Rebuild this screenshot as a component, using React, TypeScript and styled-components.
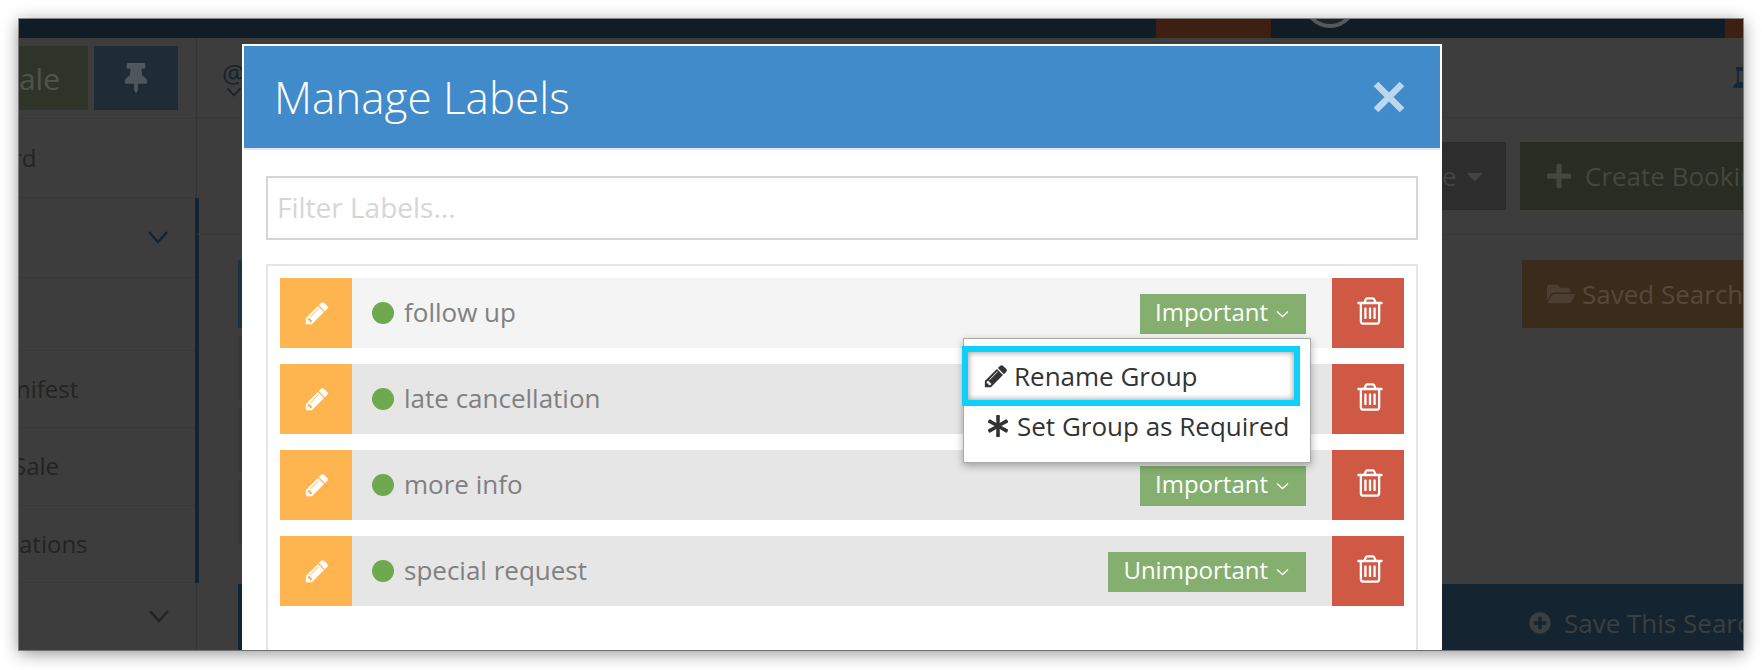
import React from 'react';
import styled, { createGlobalStyle } from 'styled-components';
import { FaAsterisk, FaCaretDown, FaFolderOpen, FaPlus, FaPlusCircle, FaThumbtack } from 'react-icons/fa';

const PENCIL =
  'M491 1536l91-91-235-235-91 91v107h128v128h107zm523-928q0-22-22-22-10 0-17 7l-542 542q-7 7-7 17 0 22 22 22 10 0 17-7l542-542q7-7 7-17zm-54-192l416 416-832 832h-416v-416zm683 96q0 53-37 90l-166 166-416-416 166-165q36-38 90-38 53 0 91 38l235 234q37 39 37 91z';
const TRASH =
  'M704 736v576q0 14-9 23t-23 9h-64q-14 0-23-9t-9-23v-576q0-14 9-23t23-9h64q14 0 23 9t9 23zm256 0v576q0 14-9 23t-23 9h-64q-14 0-23-9t-9-23v-576q0-14 9-23t23-9h64q14 0 23 9t9 23zm256 0v576q0 14-9 23t-23 9h-64q-14 0-23-9t-9-23v-576q0-14 9-23t23-9h64q14 0 23 9t9 23zm128 724v-948h-896v948q0 22 7 40.5t14.5 27 10.5 8.5h832q3 0 10.5-8.5t14.5-27 7-40.5zm-672-1076h448l-48-117q-7-9-17-11h-317q-10 2-17 11zm928 32v64q0 14-9 23t-23 9h-96v948q0 83-47 143.5t-113 60.5h-832q-66 0-113-58.5t-47-141.5v-952h-96q-14 0-23-9t-9-23v-64q0-14 9-23t23-9h309l70-167q15-37 54-63t79-26h320q40 0 79 26t54 63l70 167h309q14 0 23 9t9 23z';

const Global = createGlobalStyle`
  * { box-sizing: border-box; }
  html, body { margin: 0; padding: 0; background: #fff; }
  body { font-family: "Open Sans", "Liberation Sans", sans-serif; }
`;

const Page = styled.div`
  width: 1762px;
  height: 670px;
  padding: 19px 19px 20px;
  overflow: hidden;
`;

const Screen = styled.div`
  position: relative;
  width: 100%;
  height: 100%;
  display: flex;
  flex-direction: column;
  background: #3d3d3d;
  overflow: hidden;
`;

const Frame = styled.div`
  width: 100%;
  height: 100%;
  box-shadow: 0 3px 16px rgba(0, 0, 0, 0.45), 0 0 0 1px rgba(130, 130, 130, 0.8);
`;

const TopBar = styled.div`
  height: 19px;
  flex: none;
  display: flex;
  background: #101c26;
`;

const TopGap = styled.div<{ $w: number }>`
  width: ${p => p.$w}px;
  flex: none;
`;

const TopOrange = styled.div<{ $w: number }>`
  width: ${p => p.$w}px;
  flex: none;
  background: #3d2012;
`;

const Logo = styled.div`
  width: 54px;
  height: 54px;
  margin: -45px 0 0 32px;
  flex: none;
  border-radius: 50%;
  border: 4px solid #55595b;
  background: #1c2529;
`;

const Body = styled.div`
  flex: 1;
  display: flex;
  min-height: 0;
`;

const Sidebar = styled.div`
  width: 178px;
  flex: none;
  display: flex;
  flex-direction: column;
  border-right: 1px solid #353535;
`;

const SideActions = styled.div`
  height: 81px;
  flex: none;
  padding-top: 8px;
  display: flex;
  gap: 6px;
  border-bottom: 1px dotted #353535;
`;

const SaleButton = styled.div`
  width: 69px;
  height: 64px;
  display: flex;
  align-items: center;
  justify-content: flex-end;
  padding-right: 28px;
  background: #2e3528;
  color: #4e5547;
  font-size: 30px;
  overflow: hidden;
  white-space: nowrap;
`;

const PinButton = styled.div`
  width: 84px;
  height: 64px;
  display: flex;
  align-items: center;
  justify-content: center;
  background: #1f2b35;
  color: #4f565c;
  font-size: 30px;
`;

const SideItem = styled.div<{ $h: number }>`
  height: ${p => p.$h}px;
  flex: none;
  display: flex;
  align-items: center;
  justify-content: space-between;
  padding: 0 26px 2px 0;
  color: #232323;
  font-size: 24px;
  white-space: nowrap;
  overflow: hidden;
  border-bottom: 1px dotted #343434;
`;

const SideText = styled.span<{ $shift: number }>`
  margin-left: ${p => p.$shift}px;
`;

const SideGroup = styled.div`
  border-right: 4px solid #14232f;
  margin-right: -3px;
  display: flex;
  flex-direction: column;
`;

const Chevron = styled.svg<{ $c: string; $w: number }>`
  width: ${p => p.$w}px;
  height: ${p => Math.round((p.$w * 14) / 22)}px;
  flex: none;
  fill: none;
  stroke: ${p => p.$c};
  stroke-width: 2.4;
`;

const Main = styled.div`
  flex: 1;
  display: flex;
  flex-direction: column;
  min-width: 0;
`;

const MainHead = styled.div`
  height: 80px;
  flex: none;
  display: flex;
  align-items: center;
  justify-content: space-between;
  border-bottom: 1px dotted #353535;
`;

const AtMark = styled.div`
  margin-left: 25px;
  display: flex;
  flex-direction: column;
  align-items: center;
  color: #14232f;
  font-size: 26px;
  line-height: 28px;
`;

const UserMark = styled.svg`
  width: 10px;
  height: 21px;
  fill: #14283a;
`;

const Tools = styled.div`
  height: 117px;
  flex: none;
  padding-top: 24px;
  display: flex;
  justify-content: flex-end;
  gap: 14px;
  border-bottom: 1px dotted #353535;
`;

const ToolMenu = styled.div`
  width: 64px;
  height: 68px;
  display: flex;
  align-items: center;
  justify-content: flex-end;
  gap: 10px;
  padding-right: 24px;
  background: #2d2d2d;
  color: #444;
  font-size: 26px;
`;

const CreateButton = styled.div`
  width: 223px;
  height: 68px;
  flex: none;
  display: flex;
  align-items: center;
  gap: 12px;
  padding-left: 25px;
  background: #272d22;
  color: #43483e;
  font-size: 26px;
  white-space: nowrap;
  overflow: hidden;
  svg {
    width: 28px;
    height: 28px;
    flex: none;
  }
`;

const SavedRow = styled.div`
  flex: 1;
  padding: 25px 0 0 41px;
  display: flex;
  justify-content: space-between;
`;

const RowEdges = styled.div`
  display: flex;
  flex-direction: column;
  gap: 8px;
`;

const RowEdge = styled.div<{ $c: string; $h: number }>`
  width: 4px;
  height: ${p => p.$h}px;
  background: ${p => p.$c};
`;

const SavedButton = styled.div`
  width: 221px;
  height: 68px;
  flex: none;
  display: flex;
  align-items: center;
  gap: 7px;
  padding-left: 25px;
  background: #3b2b1b;
  color: #57483a;
  font-size: 26px;
  white-space: nowrap;
  overflow: hidden;
  svg {
    width: 28px;
    height: 28px;
    flex: none;
    color: #4c3f32;
  }
`;

const SaveBar = styled.div`
  height: 66px;
  flex: none;
  display: flex;
  align-items: center;
  margin-left: 41px;
  padding: 12px 0 0 1291px;
  gap: 13px;
  background: #142431;
  color: #3a3f42;
  font-size: 26px;
  white-space: nowrap;
  overflow: hidden;
  svg {
    width: 22px;
    height: 22px;
    flex: none;
  }
`;

const Modal = styled.div`
  position: absolute;
  left: 223px;
  top: 25px;
  width: 1200px;
  bottom: 0;
  background: #fff;
  padding: 2px 2px 0;
`;

const ModalHead = styled.div`
  height: 102px;
  display: flex;
  align-items: center;
  justify-content: space-between;
  padding: 0 35px 0 30px;
  background: #428bca;
  box-shadow: 0 2px 0 #e5e5e5;
`;

const Title = styled.h1`
  margin: 0;
  font-size: 44px;
  font-weight: 300;
  color: #fff;
`;

const CloseIcon = styled.svg`
  width: 32px;
  height: 32px;
  stroke: #bcd7ee;
  stroke-width: 6.5;
  fill: none;
`;

const FilterWrap = styled.div`
  padding: 28px 22px 24px;
`;

const Filter = styled.input`
  display: block;
  width: 100%;
  height: 64px;
  border: 2px solid #d5d5d5;
  padding: 0 9px 2px;
  font-family: inherit;
  font-size: 28px;
  outline: none;
  &::placeholder {
    color: #d6d6d6;
    opacity: 1;
  }
`;

const Panel = styled.div`
  position: relative;
  margin: 0 22px;
  padding: 12px;
  height: 400px;
  display: flex;
  flex-direction: column;
  gap: 16px;
  border: 2px solid #e5e5e5;
  border-bottom: 0;
`;

const Row = styled.div`
  height: 70px;
  flex: none;
  display: flex;
`;

const EditButton = styled.div`
  width: 72px;
  flex: none;
  display: flex;
  align-items: center;
  justify-content: center;
  padding-left: 2px;
  background: #ffb54f;
`;

const TrashButton = styled.div`
  width: 72px;
  flex: none;
  display: flex;
  align-items: center;
  justify-content: center;
  padding: 0 0 5px 4px;
  background: #d05945;
`;

const RowBody = styled.div<{ $first?: boolean }>`
  flex: 1;
  display: flex;
  align-items: center;
  padding: 0 26px 0 20px;
  background: ${p => (p.$first ? '#f4f4f4' : '#e6e6e6')};
`;

const Dot = styled.span`
  width: 22px;
  height: 22px;
  flex: none;
  border-radius: 50%;
  background: #6ea84f;
`;

const LabelName = styled.span`
  flex: 1;
  margin-left: 10px;
  padding-bottom: 3px;
  font-size: 26px;
  color: #808080;
`;

const GroupButton = styled.div`
  height: 40px;
  margin-top: 2px;
  display: flex;
  align-items: center;
  gap: 8px;
  padding: 0 17px 5px 15px;
  background: #84af6f;
  color: #fff;
  font-size: 24px;
  white-space: nowrap;
`;

const Glyph = styled.svg<{ $s: number }>`
  width: ${p => p.$s}px;
  height: ${p => p.$s}px;
  flex: none;
  fill: currentColor;
  fill-rule: evenodd;
`;

const WhiteGlyph = styled(Glyph)`
  color: #fff;
`;

const Caret = styled.svg`
  width: 13px;
  height: 8px;
  flex: none;
  margin-top: 5px;
  fill: none;
  stroke: #fff;
  stroke-width: 1.4;
`;

const Menu = styled.div`
  position: absolute;
  left: 695px;
  top: 72px;
  width: 348px;
  height: 125px;
  background: #fff;
  border: 1px solid #aaa;
  box-shadow: 0 3px 8px rgba(0, 0, 0, 0.3);
  padding-top: 7px;
`;

const MenuItem = styled.div<{ $on?: boolean }>`
  height: ${p => (p.$on ? 60 : 40)}px;
  width: ${p => (p.$on ? 338 : 346)}px;
  margin-left: ${p => (p.$on ? -2 : 0)}px;
  display: flex;
  align-items: center;
  gap: ${p => (p.$on ? 5 : 8)}px;
  padding-left: ${p => (p.$on ? 15 : 23)}px;
  font-size: 26px;
  color: #333;
  white-space: nowrap;
  svg.star {
    width: 22px;
    height: 22px;
    flex: none;
  }
  ${p =>
    p.$on &&
    `border: 6px solid #0fd0fb;
     box-shadow: inset 0 0 6px rgba(0, 0, 0, 0.45);`}
`;

const labels = [
  { name: 'follow up', group: 'Important' },
  { name: 'late cancellation', group: null },
  { name: 'more info', group: 'Important' },
  { name: 'special request', group: 'Unimportant' },
];

const downPath = 'M2 2l9 10 9-10';

export default function App() {
  return (
    <>
      <Global />
      <Page>
        <Frame>
          <Screen>
            <TopBar>
              <TopGap $w={1137} />
              <TopOrange $w={115} />
              <Logo />
              <TopGap $w={368} />
              <TopOrange $w={18} />
            </TopBar>
            <Body>
              <Sidebar>
                <SideActions>
                  <SaleButton>Sale</SaleButton>
                  <PinButton>
                    <FaThumbtack />
                  </PinButton>
                </SideActions>
                <SideItem $h={79}>
                  <SideText $shift={-7}>rd</SideText>
                </SideItem>
                <SideGroup>
                  <SideItem $h={80}>
                    <span />
                    <Chevron $c="#14232f" $w={22} viewBox="0 0 22 14">
                      <path d={downPath} />
                    </Chevron>
                  </SideItem>
                  <SideItem $h={73} />
                  <SideItem $h={77}>
                    <SideText $shift={-3}>nifest</SideText>
                  </SideItem>
                  <SideItem $h={78}>
                    <SideText $shift={-6}>Sale</SideText>
                  </SideItem>
                  <SideItem $h={77}>
                    <SideText $shift={0}>ations</SideText>
                  </SideItem>
                </SideGroup>
                <SideItem $h={68}>
                  <span />
                  <Chevron $c="#232323" $w={22} viewBox="0 0 22 14">
                    <path d={downPath} />
                  </Chevron>
                </SideItem>
              </Sidebar>
              <Main>
                <MainHead>
                  <AtMark>
                    @
                    <Chevron $c="#14232f" $w={16} viewBox="0 0 22 14">
                      <path d={downPath} />
                    </Chevron>
                  </AtMark>
                  <UserMark viewBox="0 0 10 21">
                    <path d="M3 0h7v4H6v11h4v6H0l1-3 3-3V4L3 3z" />
                  </UserMark>
                </MainHead>
                <Tools>
                  <ToolMenu>
                    e <FaCaretDown />
                  </ToolMenu>
                  <CreateButton>
                    <FaPlus /> Create Booking
                  </CreateButton>
                </Tools>
                <SavedRow>
                  <RowEdges>
                    <RowEdge $c="#1e3340" $h={68} />
                    <RowEdge $c="#383838" $h={64} />
                    <RowEdge $c="#383838" $h={64} />
                    <RowEdge $c="#383838" $h={64} />
                  </RowEdges>
                  <SavedButton>
                    <FaFolderOpen /> Saved Searches
                  </SavedButton>
                </SavedRow>
                <SaveBar>
                  <FaPlusCircle /> Save This Search
                </SaveBar>
              </Main>
            </Body>
            <Modal>
              <ModalHead>
                <Title>Manage Labels</Title>
                <CloseIcon viewBox="0 0 32 32">
                  <path d="M3 3l26 26M29 3L3 29" />
                </CloseIcon>
              </ModalHead>
              <FilterWrap>
                <Filter placeholder="Filter Labels..." readOnly />
              </FilterWrap>
              <Panel>
                {labels.map((l, i) => (
                  <Row key={l.name}>
                    <EditButton>
                      <WhiteGlyph $s={26} viewBox="0 0 1792 1792">
                        <path d={PENCIL} />
                      </WhiteGlyph>
                    </EditButton>
                    <RowBody $first={i === 0}>
                      <Dot />
                      <LabelName>{l.name}</LabelName>
                      {l.group && (
                        <GroupButton>
                          {l.group}
                          <Caret viewBox="0 0 13 8">
                            <path d="M1 1.5l5.500 5 5.500-5" />
                          </Caret>
                        </GroupButton>
                      )}
                    </RowBody>
                    <TrashButton>
                      <WhiteGlyph $s={32} viewBox="0 0 1792 1792">
                        <path d={TRASH} />
                      </WhiteGlyph>
                    </TrashButton>
                  </Row>
                ))}
                <Menu>
                  <MenuItem $on>
                    <Glyph $s={26} viewBox="0 0 1792 1792">
                      <path d={PENCIL} />
                    </Glyph>
                    Rename Group
                  </MenuItem>
                  <MenuItem>
                    <FaAsterisk className="star" />
                    Set Group as Required
                  </MenuItem>
                </Menu>
              </Panel>
            </Modal>
          </Screen>
        </Frame>
      </Page>
    </>
  );
}
